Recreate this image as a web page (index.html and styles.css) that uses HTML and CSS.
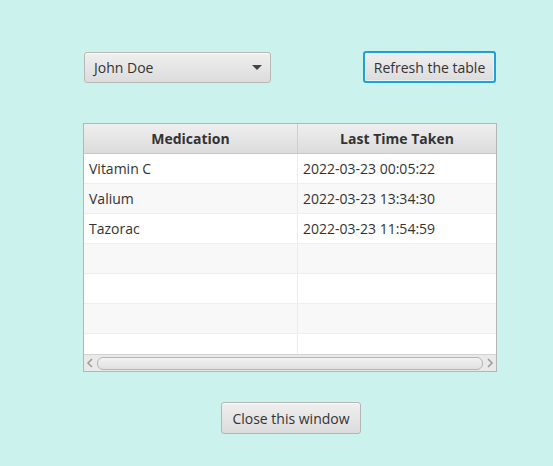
FILE: index.html
```html
<!DOCTYPE html>
<html>
<head>
<meta charset="utf-8">
<link rel="stylesheet" href="styles.css">
</head>
<body>
<div class="wrap">
  <div class="top">
    <div class="combo"><span>John Doe</span><span class="arrow"></span></div>
    <button class="btn focused">Refresh the table</button>
  </div>
  <div class="table">
    <div class="head">
      <div class="hcell c1">Medication</div>
      <div class="hcell c2">Last Time Taken</div>
    </div>
    <div class="body">
      <div class="row"><div class="cell c1">Vitamin C</div><div class="cell c2">2022-03-23 00:05:22</div></div>
      <div class="row alt"><div class="cell c1">Valium</div><div class="cell c2">2022-03-23 13:34:30</div></div>
      <div class="row"><div class="cell c1">Tazorac</div><div class="cell c2">2022-03-23 11:54:59</div></div>
      <div class="row alt"><div class="cell c1"></div><div class="cell c2"></div></div>
      <div class="row"><div class="cell c1"></div><div class="cell c2"></div></div>
      <div class="row alt"><div class="cell c1"></div><div class="cell c2"></div></div>
      <div class="row last"><div class="cell c1"></div><div class="cell c2"></div></div>
    </div>
    <div class="hbar">
      <svg class="arr" width="8" height="10" viewBox="0 0 8 10"><path d="M6 1 L2 5 L6 9" fill="none" stroke="#9a9a9a" stroke-width="1.5"/></svg>
      <div class="thumb"></div>
      <svg class="arr" width="8" height="10" viewBox="0 0 8 10"><path d="M2 1 L6 5 L2 9" fill="none" stroke="#9a9a9a" stroke-width="1.5"/></svg>
    </div>
  </div>
  <div class="bottom">
    <button class="btn">Close this window</button>
  </div>
</div>
</body>
</html>
```

FILE: styles.css
```css
html, body {
  margin: 0;
  padding: 0;
  background: #ccf2ee;
  font-family: "Open Sans", "Noto Sans", sans-serif;
  font-size: 14px;
  color: #333;
}
.wrap {
  margin-left: 83px;
  width: 414px;
  padding-top: 51px;
}
.top {
  display: flex;
  justify-content: space-between;
  align-items: flex-start;
}
.combo {
  margin-left: 1px;
  margin-top: 1px;
  width: 187px;
  height: 31px;
  box-sizing: border-box;
  border: 1px solid #b8b8b8;
  border-radius: 3px;
  background: linear-gradient(#efefef, #dcdcdc);
  display: flex;
  align-items: center;
  justify-content: space-between;
  padding: 0 8px 0 9px;
  box-shadow: inset 0 1px 0 #fbfbfb;
}
.arrow {
  width: 0;
  height: 0;
  border-left: 5px solid transparent;
  border-right: 5px solid transparent;
  border-top: 5px solid #444;
}
.btn {
  font-family: inherit;
  font-size: 14px;
  color: #333;
  height: 32px;
  box-sizing: border-box;
  border: 1px solid #b5b5b5;
  border-radius: 3px;
  background: linear-gradient(#efefef, #dcdcdc);
  padding: 0 10px;
  box-shadow: inset 0 1px 0 #fbfbfb;
  cursor: default;
}
.btn.focused {
  margin-right: 1px;
  width: 133px;
  border: 2px solid #1ea1d8;
  box-shadow: inset 0 0 0 1px #e3f5fa;
  padding: 0;
}
.table {
  margin-top: 40px;
  border: 1px solid #b5b5b5;
  background: #fff;
  width: 414px;
  box-sizing: border-box;
}
.head {
  display: flex;
  height: 30px;
  background: linear-gradient(#efefef, #dcdcdc);
  border-bottom: 1px solid #c8c8c8;
  box-sizing: border-box;
}
.hcell {
  font-weight: bold;
  display: flex;
  align-items: center;
  justify-content: center;
}
.c1 { width: 214px; box-sizing: border-box; border-right: 1px solid #cfcfcf; }
.c2 { flex: 1; }
.body .c1 { border-right: 1px solid #ebebeb; }
.row {
  display: flex;
  height: 30px;
  box-sizing: border-box;
  border-bottom: 1px solid #efefef;
  background: #fff;
}
.row.alt { background: #f8f8f8; }
.row.last { height: 20px; border-bottom: none; }
.cell {
  display: flex;
  align-items: center;
  padding-left: 5px;
  box-sizing: border-box;
}
.hbar {
  height: 17px;
  background: #e9e9e9;
  border-top: 1px solid #d3d3d3;
  box-sizing: border-box;
  display: flex;
  align-items: center;
  padding: 0 2px;
  gap: 3px;
}
.thumb {
  flex: 1;
  height: 11px;
  border: 1px solid #b5b5b5;
  border-radius: 6px;
  background: linear-gradient(#f2f2f2, #e0e0e0);
}
.bottom {
  display: flex;
  justify-content: center;
  margin-top: 30px;
  padding-left: 2px;
}
```
